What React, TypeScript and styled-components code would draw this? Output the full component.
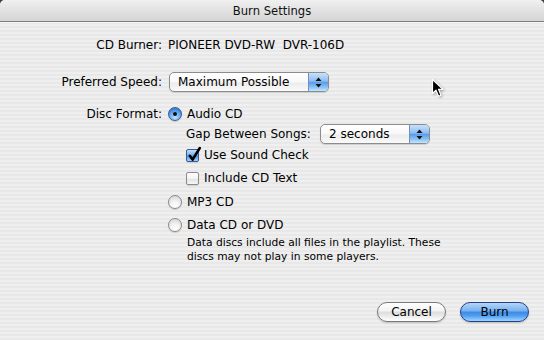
import React from "react";
import styled, { createGlobalStyle } from "styled-components";

const GlobalStyle = createGlobalStyle`
  html, body {
    margin: 0;
    padding: 0;
    background: #3c3c3c;
  }
  body {
    font-family: "DejaVu Sans", "Liberation Sans", sans-serif;
    font-size: 12px;
    color: #000;
  }
`;

const Window = styled.div`
  position: relative;
  width: 544px;
  height: 340px;
  overflow: hidden;
  display: flex;
  flex-direction: column;
  border-radius: 5px 5px 0 0;
  background: repeating-linear-gradient(
    to bottom,
    #efefef 0px,
    #efefef 2px,
    #e8e8e8 2px,
    #e8e8e8 4px
  );
`;

const TitleBar = styled.div`
  height: 21px;
  flex-shrink: 0;
  display: flex;
  align-items: center;
  justify-content: center;
  border-bottom: 1px solid #7e7e7e;
  background: linear-gradient(to bottom, #f0f0f0 0%, #e2e2e2 50%, #d5d5d5 100%);
  font-size: 11.6px;
  color: #111;
  box-shadow: 0 1px 0 #f6f6f6;
`;

const Body = styled.div`
  padding-top: 13px;
  display: flex;
  flex-direction: column;
  flex: 1;
`;

const Row = styled.div<{ $mt?: number }>`
  display: flex;
  align-items: flex-start;
  margin-top: ${({ $mt }) => $mt ?? 0}px;
`;

const Label = styled.div<{ $h: number }>`
  width: 162px;
  flex-shrink: 0;
  text-align: right;
  white-space: nowrap;
  line-height: ${({ $h }) => $h}px;
  margin-right: 6px;
`;

const Value = styled.div`
  line-height: 20px;
  white-space: pre;
`;

const Column = styled.div`
  display: flex;
  flex-direction: column;
`;

const Option = styled.div<{ $h?: number; $mt?: number; $indent?: number }>`
  display: flex;
  align-items: center;
  height: ${({ $h }) => $h ?? 18}px;
  margin-top: ${({ $mt }) => $mt ?? 0}px;
  margin-left: ${({ $indent }) => $indent ?? 0}px;
  white-space: nowrap;
`;

const Radio = styled.span<{ $on?: boolean }>`
  position: relative;
  width: 14px;
  height: 14px;
  flex-shrink: 0;
  box-sizing: border-box;
  border-radius: 50%;
  margin-right: 5px;
  border: 1px solid ${({ $on }) => ($on ? "#3c5a92" : "#8a8a8a")};
  background: ${({ $on }) =>
    $on
      ? "radial-gradient(circle at 50% 80%, #b9e2ff 0%, #6eaef0 45%, #3c83da 75%), linear-gradient(#8ab8ec, #2f78d8)"
      : "radial-gradient(circle at 50% 85%, #ffffff 0%, #f4f4f4 40%, #d6d6d6 90%)"};
  box-shadow: 0 1px 1px rgba(0, 0, 0, 0.15);

  &::after {
    content: "";
    display: ${({ $on }) => ($on ? "block" : "none")};
    position: absolute;
    left: 4px;
    top: 4px;
    width: 4px;
    height: 4px;
    border-radius: 50%;
    background: #111;
  }
`;

const Box = styled.span<{ $on?: boolean }>`
  position: relative;
  width: 13px;
  height: 13px;
  flex-shrink: 0;
  box-sizing: border-box;
  border-radius: 2px;
  margin-right: 5px;
  border: 1px solid ${({ $on }) => ($on ? "#3c5a92" : "#8a8a8a")};
  background: ${({ $on }) =>
    $on
      ? "linear-gradient(to bottom, #c3defa 0%, #7ab3ef 45%, #4f93e6 55%, #9fd2fd 100%)"
      : "linear-gradient(to bottom, #ffffff 0%, #f3f3f3 50%, #e2e2e2 55%, #f7f7f7 100%)"};
  box-shadow: 0 1px 1px rgba(0, 0, 0, 0.12);

  svg {
    position: absolute;
    left: 0px;
    top: -4px;
  }
`;

const Note = styled.div`
  margin: 2px 0 0 19px;
  font-size: 10.7px;
  line-height: 14px;
  width: 270px;
`;

const Popup = styled.div<{ $w: number; $ml?: number }>`
  display: flex;
  width: ${({ $w }) => $w}px;
  height: 20px;
  box-sizing: border-box;
  margin-left: ${({ $ml }) => $ml ?? 0}px;
  border: 1px solid #8c8c8c;
  border-radius: 5px;
  overflow: hidden;
  box-shadow: 0 1px 1px rgba(0, 0, 0, 0.15);
  background: linear-gradient(to bottom, #ffffff 0%, #f8f8f8 50%, #ececec 55%, #fafafa 100%);
`;

const PopupText = styled.span`
  flex: 1;
  padding-left: 8px;
  line-height: 18px;
  white-space: nowrap;
`;

const PopupArrows = styled.span`
  width: 19px;
  display: flex;
  align-items: center;
  justify-content: center;
  border-left: 1px solid #6f8fc0;
  background: linear-gradient(to bottom, #c9e1fb 0%, #8dbdf2 45%, #5b9be8 52%, #8cc4f7 80%, #c2e6ff 100%);
`;

const GapLabel = styled.span`
  width: 128px;
  line-height: 20px;
  white-space: nowrap;
`;

const Footer = styled.div`
  margin-top: auto;
  display: flex;
  justify-content: flex-end;
  gap: 14px;
  padding: 0 15px 18px 0;
`;

const Button = styled.button<{ $primary?: boolean }>`
  width: 69px;
  height: 20px;
  padding: 0;
  border-radius: 10px;
  font-family: inherit;
  font-size: 12px;
  color: #000;
  line-height: 18px;
  border: 1px solid ${({ $primary }) => ($primary ? "#26408a" : "#7a7a7a")};
  box-shadow: 0 1px 2px rgba(0, 0, 0, 0.2);
  background: ${({ $primary }) =>
    $primary
      ? "linear-gradient(to bottom, #b4d6f8 0%, #79b3f0 42%, #3f8be6 52%, #4f9cf0 70%, #9fd6ff 100%)"
      : "linear-gradient(to bottom, #fefefe 0%, #f4f4f4 42%, #dedede 52%, #e9e9e9 70%, #ffffff 100%)"};
`;

const Cursor = styled.svg`
  position: absolute;
  left: 431px;
  top: 78px;
  filter: drop-shadow(1px 1px 1px rgba(0, 0, 0, 0.3));
`;

const Arrows = () => (
  <svg width="7" height="11" viewBox="0 0 7 11">
    <polygon points="3.5,0.5 6.5,4 0.5,4" fill="#111" />
    <polygon points="0.5,7 6.5,7 3.5,10.5" fill="#111" />
  </svg>
);

const Check = () => (
  <svg width="15" height="16" viewBox="0 0 15 16">
    <path
      d="M2.8 9.8 L5.6 13.6 L12.8 2"
      fill="none"
      stroke="#000"
      strokeWidth="2.6"
      strokeLinecap="round"
      strokeLinejoin="round"
    />
  </svg>
);

const App: React.FC = () => {
  return (
    <>
      <GlobalStyle />
      <Window>
        <TitleBar>Burn Settings</TitleBar>
        <Body>
          <Row>
            <Label $h={20}>CD Burner:</Label>
            <Value>PIONEER DVD-RW  DVR-106D</Value>
          </Row>
          <Row $mt={17}>
            <Label $h={20}>Preferred Speed:</Label>
            <Popup $w={160} $ml={1}>
              <PopupText>Maximum Possible</PopupText>
              <PopupArrows>
                <Arrows />
              </PopupArrows>
            </Popup>
          </Row>
          <Row $mt={12}>
            <Label $h={20}>Disc Format:</Label>
            <Column>
              <Option $h={20}>
                <Radio $on />
                Audio CD
              </Option>
              <Option $h={20} $indent={18}>
                <GapLabel>Gap Between Songs:</GapLabel>
                <Popup $w={110} $ml={6}>
                  <PopupText>2 seconds</PopupText>
                  <PopupArrows>
                    <Arrows />
                  </PopupArrows>
                </Popup>
              </Option>
              <Option $mt={2} $indent={18}>
                <Box $on>
                  <Check />
                </Box>
                Use Sound Check
              </Option>
              <Option $mt={5} $indent={18}>
                <Box />
                Include CD Text
              </Option>
              <Option $mt={6}>
                <Radio />
                MP3 CD
              </Option>
              <Option $mt={5}>
                <Radio />
                Data CD or DVD
              </Option>
              <Note>
                Data discs include all files in the playlist. These discs may
                not play in some players.
              </Note>
            </Column>
          </Row>
        </Body>
        <Footer>
          <Button>Cancel</Button>
          <Button $primary>Burn</Button>
        </Footer>
        <Cursor width="14" height="20" viewBox="0 0 14 20">
          <polygon
            points="1.5,1.5 1.5,15.5 5,12.2 7.6,18.2 10,17.2 7.5,11.3 12,11.3"
            fill="#000"
            stroke="#fff"
            strokeWidth="1.2"
            strokeLinejoin="round"
          />
        </Cursor>
      </Window>
    </>
  );
};

export default App;
